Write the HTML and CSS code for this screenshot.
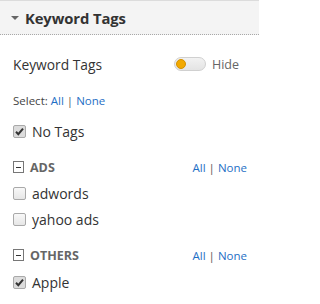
FILE: index.html
```html
<!DOCTYPE html>
<html>
<head>
<meta charset="utf-8">
<link rel="stylesheet" href="styles.css">
</head>
<body>
<div class="panel">
  <div class="header">
    <span class="caret"></span>
    <span class="title">Keyword Tags</span>
  </div>
  <div class="body">
    <div class="row-toggle">
      <span class="label">Keyword Tags</span>
      <span class="toggle-wrap">
        <span class="toggle"><span class="knob"></span></span>
        <span class="hide">Hide</span>
      </span>
    </div>
    <div class="select">Select: <a class="lnk">All</a> <span class="sep">|</span> <a class="lnk">None</a></div>
    <div class="item notags">
      <span class="cb checked"><svg viewBox="0 0 13 13" width="13" height="13"><path d="M3 6.8 L5.3 9.2 L10 3.6" fill="none" stroke="#333" stroke-width="2"/></svg></span>
      <span>No Tags</span>
    </div>
    <div class="group">
      <div class="ghead">
        <span class="minus"></span>
        <span class="gname">ADS</span>
        <span class="gsel"><a class="lnk">All</a> <span class="sep">|</span> <a class="lnk">None</a></span>
      </div>
      <div class="item"><span class="cb"></span><span>adwords</span></div>
      <div class="item"><span class="cb"></span><span>yahoo ads</span></div>
    </div>
    <div class="group">
      <div class="ghead">
        <span class="minus"></span>
        <span class="gname">OTHERS</span>
        <span class="gsel"><a class="lnk">All</a> <span class="sep">|</span> <a class="lnk">None</a></span>
      </div>
      <div class="item last"><span class="cb checked"><svg viewBox="0 0 13 13" width="13" height="13"><path d="M3 6.8 L5.3 9.2 L10 3.6" fill="none" stroke="#333" stroke-width="2"/></svg></span><span>Apple</span></div>
    </div>
  </div>
</div>
</body>
</html>
```
FILE: styles.css
```css
html, body {
  margin: 0;
  padding: 0;
  background: #fff;
}
body {
  font-family: "Open Sans", "Noto Sans", sans-serif;
  color: #333;
  width: 259px;
  height: 304px;
  overflow: hidden;
}
.panel {
  border-top: 1px solid #dcdcdc;
}
.header {
  background: #f4f4f4;
  border-bottom: 1px dotted #a8a8a8;
  display: flex;
  align-items: center;
  padding-left: 11px;
  box-sizing: border-box;
  height: 34px;
}
.caret {
  width: 0;
  height: 0;
  border-left: 4px solid transparent;
  border-right: 4px solid transparent;
  border-top: 4px solid #666;
  margin-right: 6px;
  margin-top: 1px;
}
.title {
  font-weight: bold;
  font-size: 14.8px;
  color: #333;
  letter-spacing: -0.1px;
}
.body {
  padding: 0 12px 0 13px;
}
.row-toggle {
  display: flex;
  align-items: center;
  justify-content: space-between;
  height: 30px;
  margin-top: 14px;
}
.label {
  font-size: 13.8px;
  color: #333;
}
.toggle-wrap {
  display: flex;
  align-items: center;
  gap: 6px;
  margin-right: 8px;
}
.toggle {
  width: 29px;
  height: 12px;
  border-radius: 7px;
  border: 1px solid #d0d0d0;
  background: linear-gradient(#f2f2f2, #e4e4e4);
  display: flex;
  align-items: center;
  padding-left: 1px;
}
.knob {
  width: 10px;
  height: 10px;
  border-radius: 50%;
  background: #f2a900;
  border: 1px solid #d49000;
  box-sizing: border-box;
}
.hide {
  font-size: 12.5px;
  color: #666;
}
.select {
  font-size: 11.5px;
  color: #444;
  margin-top: 14px;
  height: 16px;
}
.lnk {
  color: #1f6fc5;
}
.sep {
  color: #555;
}
.item {
  display: flex;
  align-items: center;
  gap: 6px;
  font-size: 14px;
  color: #333;
  height: 26px;
}
.item.last {
  margin-top: 1px;
}
.notags {
  margin-top: 9px;
  margin-bottom: 3px;
}
.cb {
  width: 13px;
  height: 13px;
  box-sizing: border-box;
  border: 1px solid #a9a9a9;
  border-radius: 2px;
  background: linear-gradient(#f8f8f8, #e6e6e6);
  display: inline-block;
  position: relative;
}
.cb svg {
  position: absolute;
  left: -1px;
  top: -1px;
}
.cb.checked {
  background: #dcdcdc;
}
.group {
  margin-top: 10px;
}
.ghead {
  display: flex;
  align-items: center;
  height: 26px;
}
.minus {
  width: 11px;
  height: 12px;
  box-sizing: border-box;
  border: 1px solid #777;
  position: relative;
  margin-right: 6px;
  background: #fff;
}
.minus::after {
  content: "";
  position: absolute;
  left: 2px;
  right: 2px;
  top: 5px;
  height: 1px;
  background: #333;
}
.gname {
  font-weight: bold;
  font-size: 12.5px;
  color: #666;
  flex: 1;
}
.gsel {
  font-size: 11.5px;
}
```
